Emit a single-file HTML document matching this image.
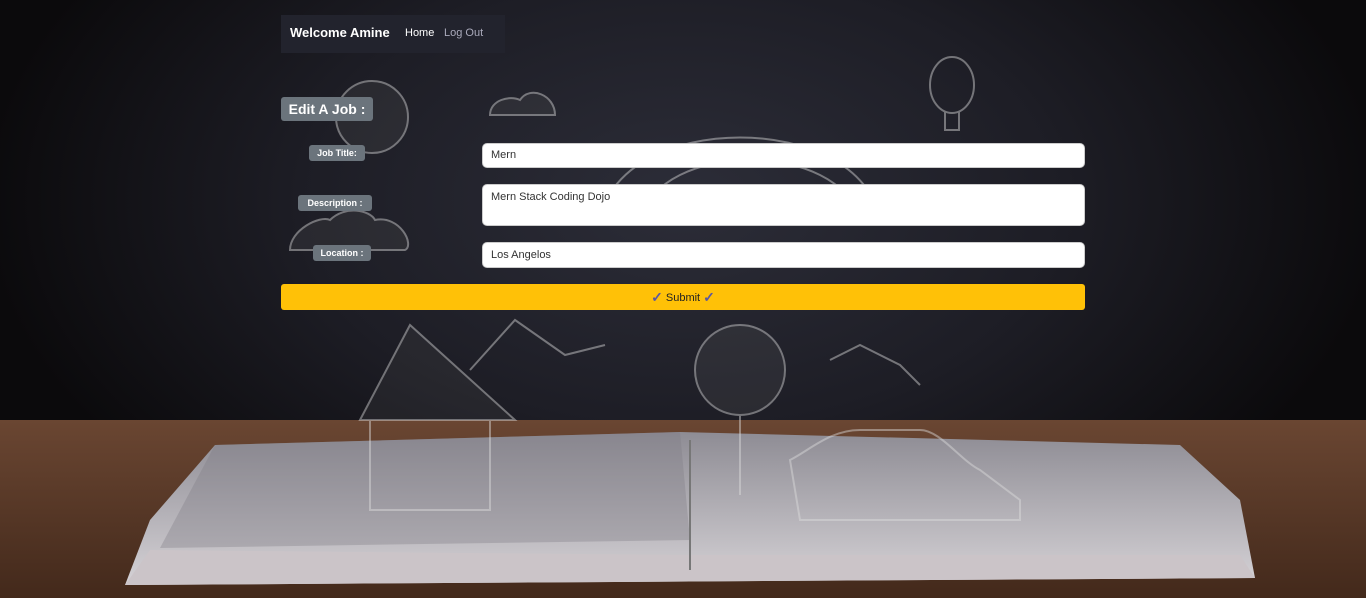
<!DOCTYPE html>
<html><head><meta charset="utf-8"><style>
html,body{margin:0;padding:0;width:1366px;height:598px;overflow:hidden;font-family:"Liberation Sans",sans-serif}
body{position:relative;background:radial-gradient(ellipse 700px 420px at 683px 200px,#2c2d38 0%,#1d1d25 55%,#0b0a0c 100%)}
.bg{position:absolute;left:0;top:0}
.nav{position:absolute;left:281px;top:15px;width:224px;height:38px;background:#22232d}
.nav b{position:absolute;left:9px;top:10px;color:#fff;font-size:13px}
.nav .h{position:absolute;left:124px;top:12px;color:#fff;font-size:11px}
.nav .l{position:absolute;left:163px;top:12px;color:#aab;font-size:11px}
.edit{position:absolute;left:281px;top:97px;width:92px;height:24px;background:#6b747c;border-radius:3px;color:#fff;font-weight:bold;font-size:14px;line-height:24px;text-align:center}
.lab{position:absolute;background:#6b747c;border-radius:3px;color:#fff;font-weight:bold;font-size:9px;height:16px;line-height:16px;text-align:center}
.in{position:absolute;left:482px;width:603px;background:#fff;border:1px solid #ccc;border-radius:5px;font-size:11px;color:#333;padding:0 8px;box-sizing:border-box}
.btn{position:absolute;left:281px;top:284px;width:804px;height:26px;background:#ffc107;border-radius:3px;text-align:center;line-height:26px;font-size:11px;color:#222}
.btn span{color:#5b58a0;font-weight:bold;font-size:14px;vertical-align:-1px}
</style></head><body>
<svg class="bg" width="1366" height="598">
<defs>
<linearGradient id="t" x1="0" y1="0" x2="0" y2="1"><stop offset="0" stop-color="#6a4632"/><stop offset="1" stop-color="#43291b"/></linearGradient>
<linearGradient id="p" x1="0" y1="0" x2="0" y2="1"><stop offset="0" stop-color="#8e8c94"/><stop offset="1" stop-color="#d5d2d6"/></linearGradient>
</defs>
<rect x="0" y="420" width="1366" height="178" fill="url(#t)"/>
<polygon points="215,445 680,432 1180,445 1240,500 1255,578 125,585 150,520" fill="url(#p)"/>
<polygon points="150,550 690,555 1240,555 1255,578 125,585" fill="#cbc4c8"/>
<polygon points="215,445 680,432 690,540 160,548" fill="#7d7b83" opacity=".35"/>
<line x1="690" y1="440" x2="690" y2="570" stroke="#777" stroke-width="2"/>
<g fill="none" stroke="#ddd" stroke-width="2" opacity=".45">
<circle cx="372" cy="117" r="36" fill="#555" fill-opacity=".5"/>
<path d="M290 250c0-20 30-35 40-30 15-15 40-10 45 0 25-5 40 25 30 30H290z" fill="#555" fill-opacity=".5"/>
<path d="M490 115c0-15 20-20 30-15 10-15 35-5 35 15z" fill="#555" fill-opacity=".5"/>
<path d="M600 220c20-110 260-110 280 0"/><path d="M640 220c20-80 200-80 220 0"/>
<path d="M360 420l50-95 105 95z" fill="#555" fill-opacity=".4"/><path d="M370 420v90h120v-90"/>
<path d="M470 370l45-50 50 35 40-10"/><path d="M830 360l30-15 40 20 20 20"/>
<circle cx="740" cy="370" r="45" fill="#666" fill-opacity=".4"/><path d="M740 415v80"/>
<path d="M790 460c20-10 40-30 70-30h60c20 0 40 30 60 40l40 30v20H800z"/>
<ellipse cx="952" cy="85" rx="22" ry="28"/><path d="M945 112v18h14v-18"/>
</g>
</svg>
<div class="nav"><b>Welcome Amine</b><span class="h">Home</span><span class="l">Log Out</span></div>
<div class="edit">Edit A Job :</div>
<div class="lab" style="left:309px;top:145px;width:56px">Job Title:</div>
<div class="lab" style="left:298px;top:195px;width:74px">Description :</div>
<div class="lab" style="left:313px;top:245px;width:58px">Location :</div>
<div class="in" style="top:143px;height:25px;line-height:23px">Mern</div>
<div class="in" style="top:184px;height:42px;padding-top:6px">Mern Stack Coding Dojo</div>
<div class="in" style="top:242px;height:26px;line-height:24px">Los Angelos</div>
<div class="btn"><span>✓</span> Submit <span>✓</span></div>
</body></html>
